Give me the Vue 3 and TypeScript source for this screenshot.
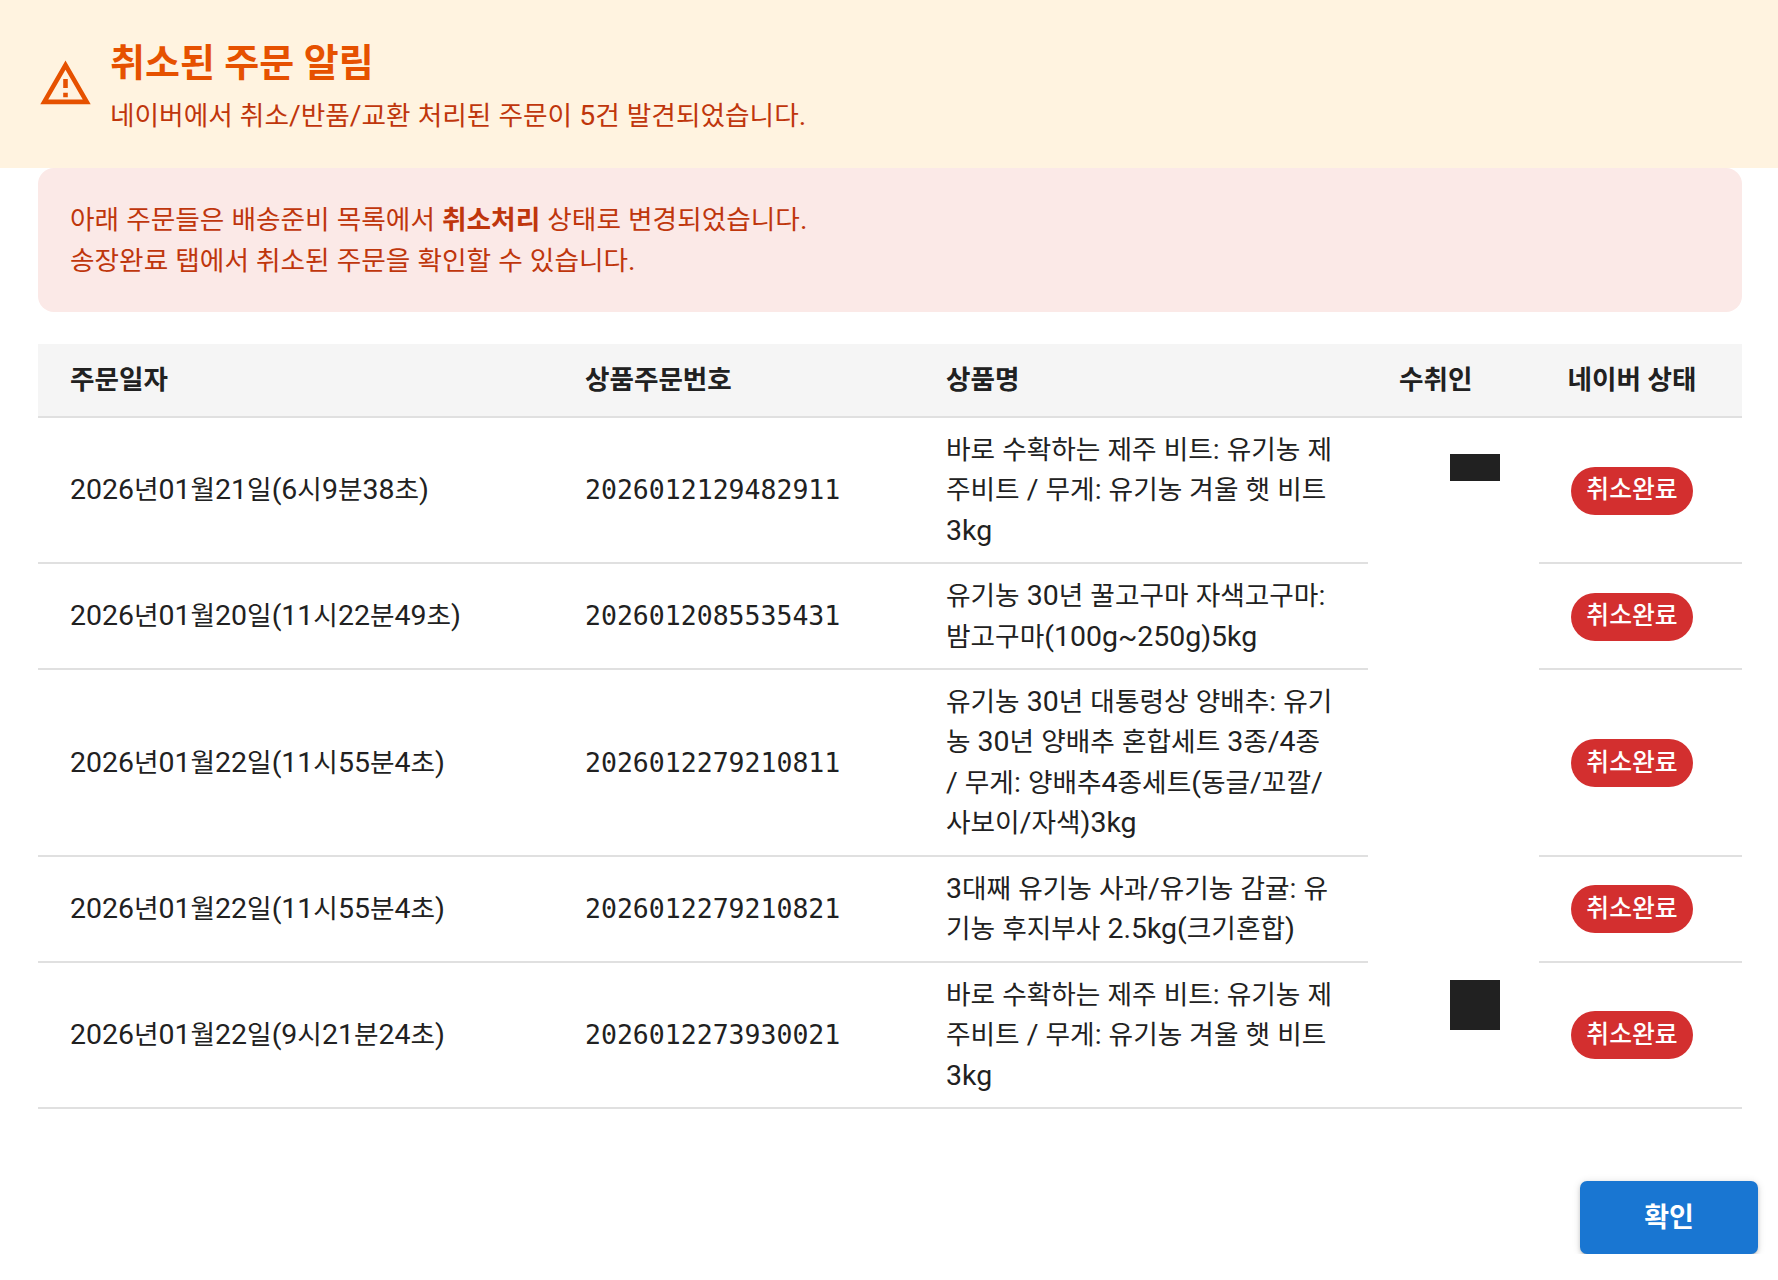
<script setup lang="ts">
import { h } from "vue";

interface Order {
  date: string;
  orderNo: string;
  product: string;
}

const orders: Order[] = [
  {
    date: "2026년01월21일(6시9분38초)",
    orderNo: "2026012129482911",
    product: "바로 수확하는 제주 비트: 유기농 제주비트 / 무게: 유기농 겨울 햇 비트 3kg",
  },
  {
    date: "2026년01월20일(11시22분49초)",
    orderNo: "2026012085535431",
    product: "유기농 30년 꿀고구마 자색고구마: 밤고구마(100g~250g)5kg",
  },
  {
    date: "2026년01월22일(11시55분4초)",
    orderNo: "2026012279210811",
    product: "유기농 30년 대통령상 양배추: 유기농 30년 양배추 혼합세트 3종/4종 / 무게: 양배추4종세트(동글/꼬깔/사보이/자색)3kg",
  },
  {
    date: "2026년01월22일(11시55분4초)",
    orderNo: "2026012279210821",
    product: "3대째 유기농 사과/유기농 감귤: 유기농 후지부사 2.5kg(크기혼합)",
  },
  {
    date: "2026년01월22일(9시21분24초)",
    orderNo: "2026012273930021",
    product: "바로 수확하는 제주 비트: 유기농 제주비트 / 무게: 유기농 겨울 햇 비트 3kg",
  },
];

// latin runs are set a bit larger than the hangul around them
const Mixed = (props: { text: string }) =>
  props.text
    .split(/([\x20-\x7e]+)/)
    .filter(Boolean)
    .map((run) => (/^[\x20-\x7e]/.test(run) ? h("span", { class: "latin" }, run) : run));
</script>

<template>
  <div class="dialog">
    <header class="banner">
      <svg class="warn" viewBox="0 0 24 24" aria-hidden="true">
        <path d="M12 5.99 19.53 19H4.47L12 5.99M12 2 1 21h22L12 2zm1 14h-2v2h2v-2zm0-6h-2v4h2v-4z" />
      </svg>
      <div class="banner-text">
        <h2>취소된 주문 알림</h2>
        <p><Mixed text="네이버에서 취소/반품/교환 처리된 주문이 5건 발견되었습니다." /></p>
      </div>
    </header>

    <div class="content">
      <div class="notice">
        <p>
          <Mixed text="아래 주문들은 배송준비 목록에서 " /><strong>취소처리</strong><Mixed text=" 상태로 변경되었습니다." />
        </p>
        <p><Mixed text="송장완료 탭에서 취소된 주문을 확인할 수 있습니다." /></p>
      </div>

      <div class="table">
        <div class="cell head">주문일자</div>
        <div class="cell head">상품주문번호</div>
        <div class="cell head">상품명</div>
        <div class="cell head head-receiver">수취인</div>
        <div class="cell head center">네이버 상태</div>

        <div class="receiver">
          <span class="mask mask-name"></span>
          <span class="mask mask-square"></span>
        </div>

        <template v-for="(order, i) in orders" :key="i">
          <div class="cell col-date" :style="{ gridRow: i + 2 }"><span><Mixed :text="order.date" /></span></div>
          <div class="cell mono" :style="{ gridRow: i + 2 }">{{ order.orderNo }}</div>
          <div class="cell product" :style="{ gridRow: i + 2 }"><span><Mixed :text="order.product" /></span></div>
          <div class="cell center col-status" :style="{ gridRow: i + 2 }">
            <span class="chip">취소완료</span>
          </div>
        </template>
      </div>
    </div>

    <div class="actions">
      <button type="button">확인</button>
    </div>
  </div>
</template>

<style>
html,
body {
  background: #fff;
}

.latin {
  font-size: 1.066em;
}
</style>

<style scoped>
.dialog {
  font-family: Roboto, "Noto Sans CJK KR", sans-serif;
  color: #212121;
  font-size: 26.7px;
  line-height: 40.5px;
}

.banner {
  height: 168px;
  box-sizing: border-box;
  background: #fff3e0;
  padding: 0 38px;
  display: flex;
  align-items: center;
  gap: 17px;
}

.warn {
  width: 55px;
  height: 55px;
  margin-bottom: 1px;
  fill: #e65100;
  flex: none;
}

.banner-text {
  padding-top: 3px;
}

h2 {
  margin: 0;
  font-size: 38px;
  line-height: 56px;
  font-weight: 700;
  color: #e65100;
}

.banner-text p {
  margin: 5px 0 0;
  line-height: 40px;
  color: #bf360c;
}

.content {
  padding: 0 36px 0 38px;
}

.notice {
  background: #fbe9e7;
  border-radius: 16px;
  padding: 32px;
  height: 144px;
  box-sizing: border-box;
  color: #bf360c;
}

.notice p {
  margin: 0;
}

.table {
  margin-top: 32px;
  display: grid;
  grid-template-columns: 515px 361px 454px 171px 203px;
}

.cell {
  display: flex;
  align-items: center;
  padding: 11.9px 32px 10.9px;
  border-bottom: 2px solid #e0e0e0;
}

.head {
  height: 74px;
  box-sizing: border-box;
  background: #f5f5f5;
  font-size: 26.6px;
  font-weight: 700;
  padding-top: 0;
  padding-bottom: 0;
}

.head-receiver {
  padding-left: 31px;
}

.center {
  justify-content: center;
}

.cell.center {
  padding-left: 0;
  padding-right: 17px;
}

.col-date {
  grid-column: 1;
}

.mono {
  grid-column: 2;
  font-family: "DejaVu Sans Mono", monospace;
  font-size: 26.5px;
}

.product {
  grid-column: 3;
}

.col-status {
  grid-column: 5;
}

.receiver {
  grid-column: 4;
  grid-row: 2 / span 5;
  display: flex;
  flex-direction: column;
  justify-content: space-between;
  align-items: flex-start;
  padding: 36px 0 77px 82px;
  border-bottom: 2px solid #e0e0e0;
}

.mask {
  display: block;
  width: 50px;
  background: #212121;
}

.mask-name {
  height: 27px;
}

.mask-square {
  height: 50px;
}

.chip {
  display: inline-flex;
  align-items: center;
  height: 48px;
  padding: 0 15.5px;
  border-radius: 24px;
  background: #d32f2f;
  color: #fff;
  font-size: 24.8px;
  font-weight: 500;
}

.actions {
  display: flex;
  justify-content: flex-end;
  padding: 72px 20px 0 0;
}

button {
  width: 178px;
  height: 73px;
  padding: 0 0 3px;
  border: 0;
  border-radius: 7px;
  background: #1976d2;
  color: #fff;
  font: 700 27px Roboto, "Noto Sans CJK KR", sans-serif;
  box-shadow: 0 3px 2px -2px rgba(0, 0, 0, 0.2), 0 2px 4px 0 rgba(0, 0, 0, 0.14), 0 1px 8px 0 rgba(0, 0, 0, 0.12);
}
</style>
